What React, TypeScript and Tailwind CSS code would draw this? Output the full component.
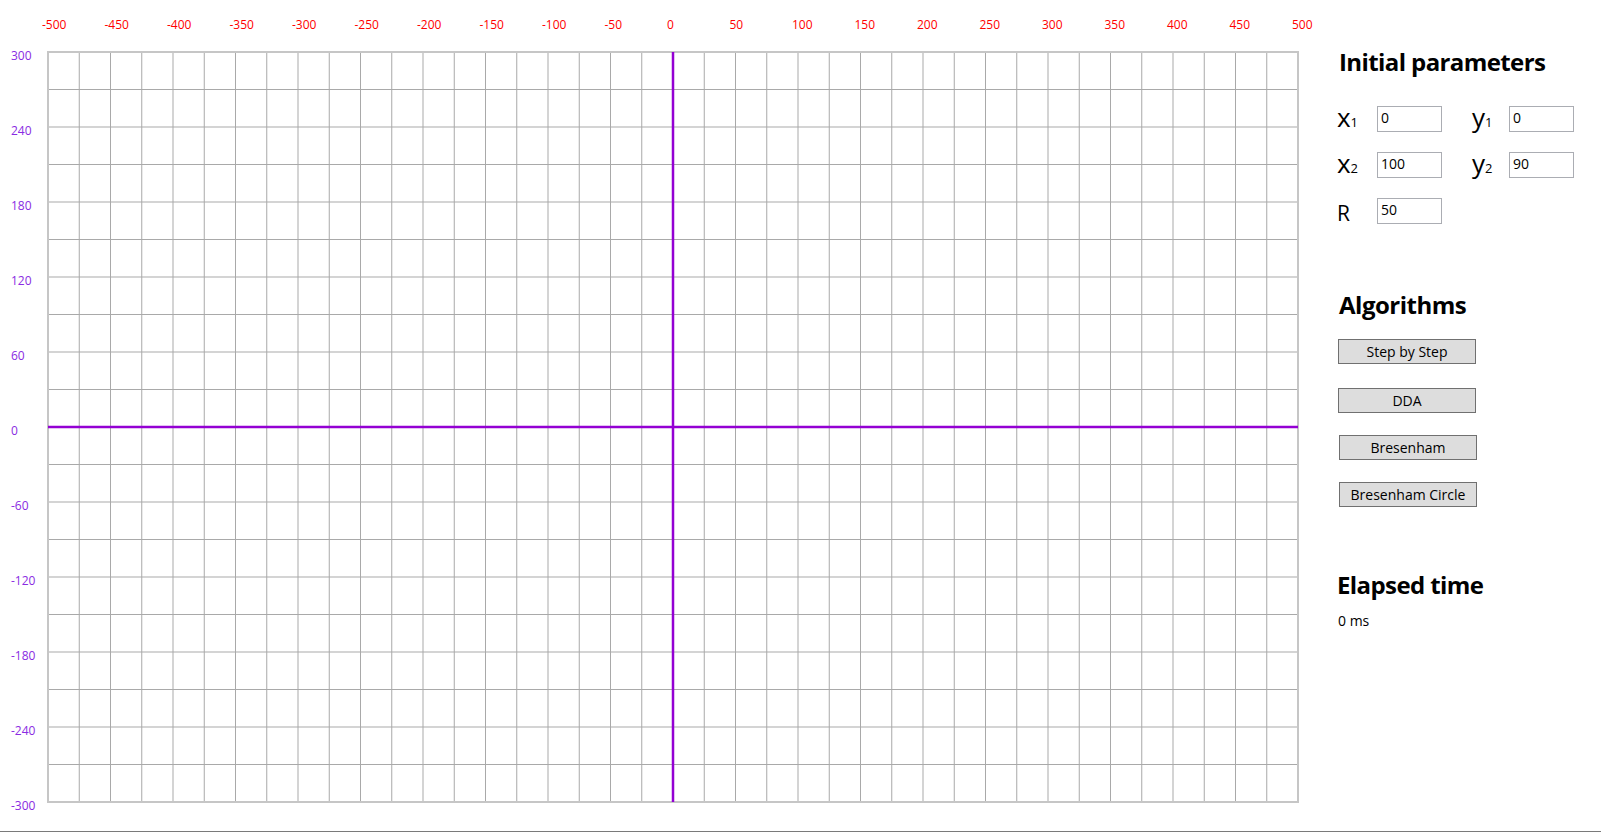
import React from "react";

const GRID_X = 48;
const GRID_Y = 52;
const GRID_W = 1250;
const GRID_H = 750;
const COLS = 40;
const ROWS = 20;

const xLabels = Array.from({ length: 21 }, (_, i) => -500 + i * 50);
const yLabels = Array.from({ length: 11 }, (_, i) => 300 - i * 60);

// Coordinate plane: grid, axes and tick labels
const Plane = () => {
  const colW = GRID_W / COLS;
  const rowH = GRID_H / ROWS;
  const toX = (v: number) => GRID_X + ((v + 500) / 1000) * GRID_W;
  const toY = (v: number) => GRID_Y + ((300 - v) / 600) * GRID_H;

  return (
    <svg
      width={1320}
      height={820}
      className="shrink-0"
      style={{ fontFamily: "'Open Sans', 'Noto Sans', sans-serif" }}
    >
      {Array.from({ length: COLS - 1 }, (_, i) => {
        const x = GRID_X + (i + 1) * colW;
        return (
          <line key={`v${i}`} x1={x} y1={GRID_Y} x2={x} y2={GRID_Y + GRID_H} stroke="#a9a9a9" strokeWidth={1} />
        );
      })}
      {Array.from({ length: ROWS - 1 }, (_, i) => {
        const y = GRID_Y + (i + 1) * rowH;
        return (
          <line key={`h${i}`} x1={GRID_X} y1={y} x2={GRID_X + GRID_W} y2={y} stroke="#a9a9a9" strokeWidth={1} />
        );
      })}
      <rect x={GRID_X} y={GRID_Y} width={GRID_W} height={GRID_H} fill="none" stroke="#c6c6c6" strokeWidth={2} />

      {/* axes */}
      <line x1={GRID_X} y1={toY(0)} x2={GRID_X + GRID_W} y2={toY(0)} stroke="#9400d3" strokeWidth={2.5} />
      <line x1={toX(0)} y1={GRID_Y} x2={toX(0)} y2={GRID_Y + GRID_H} stroke="#9400d3" strokeWidth={2.5} />

      {xLabels.map((v) => (
        <text key={`xl${v}`} x={toX(v) - 6} y={29} fontSize={12} fill="#ff0000">
          {v}
        </text>
      ))}
      {yLabels.map((v) => (
        <text key={`yl${v}`} x={11} y={toY(v) + 8} fontSize={12} fill="#8a2be2">
          {v}
        </text>
      ))}
    </svg>
  );
};

const Field = ({ value }: { value: string }) => (
  <input
    defaultValue={value}
    className="h-[26px] w-[65px] border border-[#abadb3] bg-white pl-[3px] pb-[3px] text-[14px] leading-[20px] text-black outline-none"
  />
);

const VarLabel = ({ name, sub }: { name: string; sub: string }) => (
  <span className="flex h-[26px] items-baseline text-[26px] leading-[22px] text-black">
    {name}
    <span className="text-[13px] leading-[13px]">{sub}</span>
  </span>
);

const AlgoButton = ({ label, className }: { label: string; className?: string }) => (
  <button
    className={`h-[25px] w-[138px] border border-[#707070] bg-[#dddddd] text-[14px] leading-[20px] text-black ${className ?? ""}`}
  >
    {label}
  </button>
);

export default function App() {
  return (
    <div
      className="flex h-[833px] w-full flex-col bg-white"
      style={{ fontFamily: "'Open Sans', 'Noto Sans', sans-serif" }}
    >
      <div className="flex flex-1 border-b border-[#7a7a7a]">
        <Plane />

        <div className="flex flex-col pl-[17px] pt-[46px]">
          <h2 className="h-[32px] pl-[2px] text-[24px] font-bold leading-[32px] tracking-[-0.6px] text-black">
            Initial parameters
          </h2>

          <div className="mt-[28px] grid grid-cols-[40px_65px_30px_37px_65px] grid-rows-[26px_26px_26px] gap-y-[20px] items-center">
            <VarLabel name="x" sub="1" />
            <Field value="0" />
            <span />
            <VarLabel name="y" sub="1" />
            <Field value="0" />

            <VarLabel name="x" sub="2" />
            <Field value="100" />
            <span />
            <VarLabel name="y" sub="2" />
            <Field value="90" />

            <span className="h-[26px] text-[21px] leading-[30px] text-black">R</span>
            <Field value="50" />
          </div>

          <h2 className="mt-[65px] h-[32px] pl-[2px] text-[24px] font-bold leading-[32px] tracking-[-0.5px] text-black">
            Algorithms
          </h2>
          <div className="flex flex-col pl-[1px]">
            <AlgoButton label="Step by Step" className="mt-[18px]" />
            <AlgoButton label="DDA" className="mt-[24px]" />
            <AlgoButton label="Bresenham" className="ml-[1px] mt-[22px]" />
            <AlgoButton label="Bresenham Circle" className="ml-[1px] mt-[22px]" />
          </div>

          <h2 className="mt-[62px] h-[32px] text-[24px] font-bold leading-[32px] tracking-[-0.6px] text-black">
            Elapsed time
          </h2>
          <p className="mt-[10px] pl-[1px] text-[14px] leading-[20px] text-black">0 ms</p>
        </div>
      </div>
      <div className="h-px" />
    </div>
  );
}
